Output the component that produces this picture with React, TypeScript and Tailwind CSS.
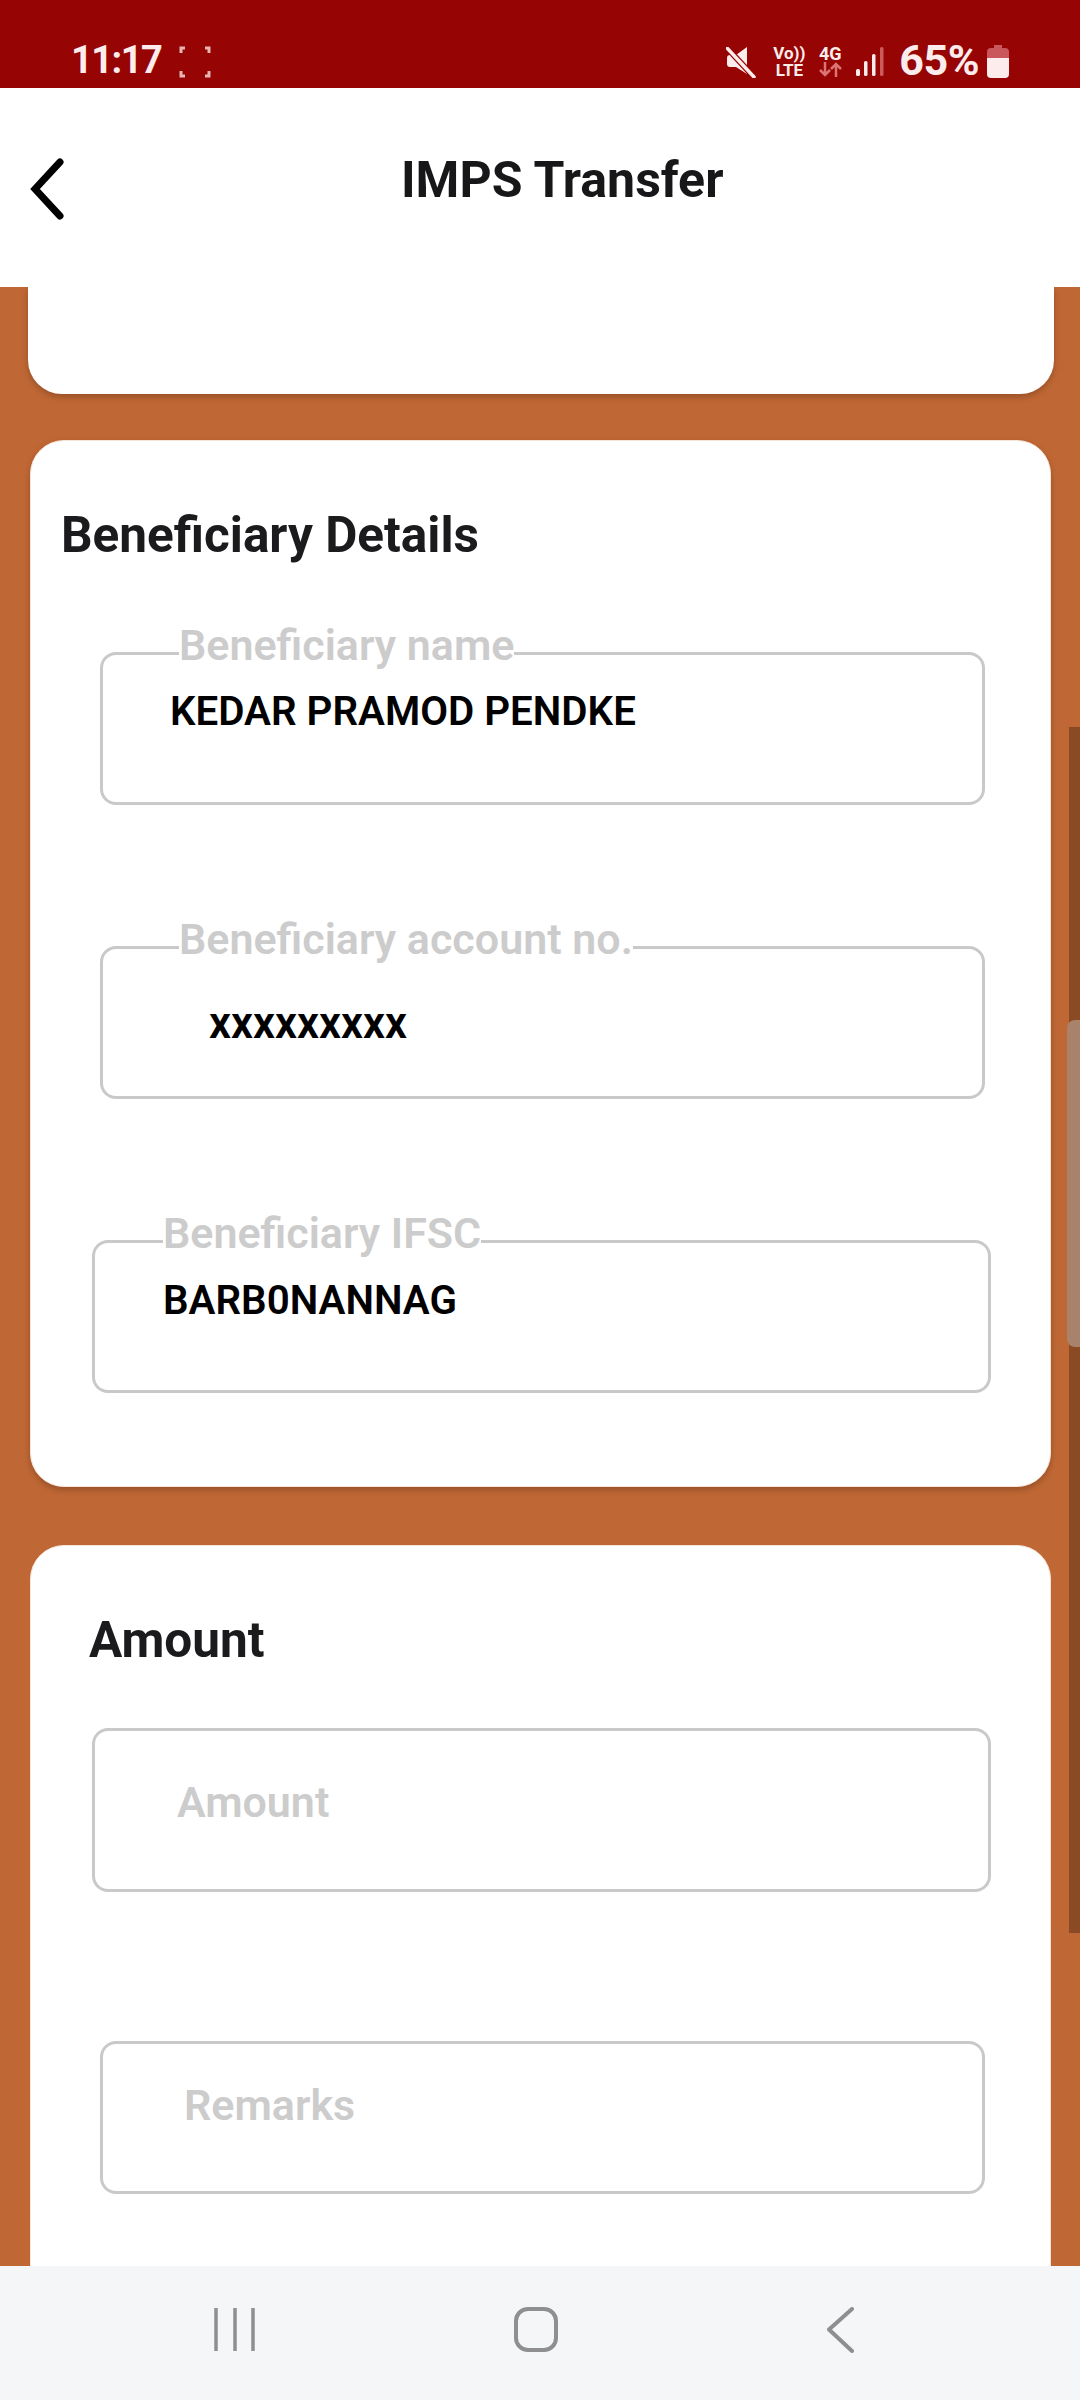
const Field = ({ label, value, placeholder, boxClass, labelClass, textClass }: { label?: string; value?: string; placeholder?: string; boxClass: string; labelClass?: string; textClass: string }) => (
    <div className={`relative rounded-[16px] border-[3px] border-[#c9c9c9] bg-white ${boxClass}`}>
        {label ? <span className={`absolute top-[-34px] bg-white text-[43px] leading-[48px] font-semibold text-[#cccccc] ${labelClass ?? ""}`}>{label}</span> : null}
        {value ? <p className={`font-semibold text-black ${textClass}`}>{value}</p> : null}
        {placeholder ? <p className={`text-[43px] leading-[48px] font-semibold text-[#cccccc] ${textClass}`}>{placeholder}</p> : null}
    </div>
);

function StatusBar() {
    return (
        <div className="flex h-[88px] shrink-0 items-start bg-[#960404] pt-[38px] text-[#fdecec]">
            <span className="ml-[71px] text-[38px] leading-[44px] font-bold tracking-[-1.5px]">11:17</span>
            <svg className="mt-[8px] ml-[18px]" width="32" height="32" viewBox="0 0 32 32" fill="none" stroke="#e8b4b4" strokeWidth="3">
                <path d="M6 2H2v5M26 2h4v5M2 25v5h4M30 25v5h-4" />
            </svg>
            <div className="ml-auto mr-[71px] flex items-start">
                <svg className="mt-[9px]" width="30" height="31" viewBox="0 0 30 31" fill="#fdecec">
                    <path d="M21 0v27L10 20H4a3 3 0 0 1-3-3v-6a3 3 0 0 1 3-3h6z" />
                    <path d="M1 1l27 29" stroke="#960404" strokeWidth="6" />
                    <path d="M1 1l27 29" stroke="#fdecec" strokeWidth="3.500" strokeLinecap="round" />
                </svg>
                <div className="ml-[17px] mt-[7px] flex w-[32px] flex-col items-center text-[17px] leading-[17px] font-bold">
                    <span>Vo))</span>
                    <span>LTE</span>
                </div>
                <div className="ml-[12px] mt-[7px] flex w-[26px] flex-col items-center">
                    <span className="text-[18px] leading-[17px] font-bold">4G</span>
                    <svg width="25" height="15" viewBox="0 0 25 15" fill="none" stroke="#dc7474" strokeWidth="2.500">
                        <path d="M7 0v13M2 8l5 5 5-5M18 15V2M13 7l5-5 5 5" />
                    </svg>
                </div>
                <svg className="mt-[9px] ml-[13px]" width="28" height="30" viewBox="0 0 28 30">
                    <rect x="0" y="22" width="4" height="7" rx="1.500" fill="#fdecec" />
                    <rect x="8" y="14" width="3.500" height="15" rx="1.500" fill="#fdecec" />
                    <rect x="16" y="7" width="3.500" height="22" rx="1.500" fill="#fdecec" />
                    <rect x="24" y="0" width="3.500" height="29" rx="1.500" fill="#cc5a5a" />
                </svg>
                <span className="ml-[15px] text-[43px] leading-[44px] font-bold tracking-[-0.5px]">65%</span>
                <svg className="mt-[7px] ml-[8px]" width="22" height="33" viewBox="0 0 22 33">
                    <path d="M7 0h8v3h3a4 4 0 0 1 4 4v6H0V7a4 4 0 0 1 4-4h3z" fill="#c9575b" />
                    <path d="M0 13h22v16a4 4 0 0 1-4 4H4a4 4 0 0 1-4-4z" fill="#fdecec" />
                </svg>
            </div>
        </div>
    );
}

function NavBar() {
    return (
        <div className="flex h-[134px] shrink-0 items-start bg-[#f5f6f8] pt-[41px]">
            <svg className="ml-[212px]" width="44" height="46" viewBox="0 0 44 46" stroke="#8f8f92" strokeWidth="3.500" fill="none">
                <path d="M4 1v43M23 1v43M41 1v43" />
            </svg>
            <svg className="ml-[258px]" width="44" height="46" viewBox="0 0 44 46" stroke="#8f8f92" strokeWidth="4" fill="none">
                <rect x="2" y="2" width="40" height="41" rx="12" />
            </svg>
            <svg className="ml-[268px]" width="30" height="46" viewBox="0 0 30 46" stroke="#8f8f92" strokeWidth="4" strokeLinecap="round" strokeLinejoin="round" fill="none">
                <path d="M26 2L3 22.500L26 44" />
            </svg>
        </div>
    );
}

export default function App() {
    return (
        <div className="relative flex h-[2400px] w-[1080px] flex-col overflow-hidden font-[family-name:Roboto]">
            <StatusBar />

            <div className="relative flex h-[199px] shrink-0 items-start bg-white">
                <svg className="absolute top-[70px] left-[27px]" width="38" height="62" viewBox="0 0 38 62" fill="none" stroke="#000" strokeWidth="7" strokeLinecap="round" strokeLinejoin="miter">
                    <path d="M33 4L8 31l25 27" />
                </svg>
                <h1 className="ml-[401px] mt-[64px] text-[50px] leading-[56px] font-bold text-[#17171a]">IMPS Transfer</h1>
            </div>

            <div className="relative min-h-0 flex-1 overflow-hidden bg-[#c06835]">
                <div className="ml-[28px] h-[107px] w-[1026px] rounded-b-[34px] bg-white shadow-[0_3px_6px_rgba(90,45,20,0.4)]" />

                <div className="mt-[46px] ml-[30px] h-[1047px] w-[1021px] rounded-[34px] border border-[#f6e4d8] bg-white pt-[67px] shadow-[0_3px_6px_rgba(90,45,20,0.4)]">
                    <h2 className="ml-[30px] text-[49.500px] leading-[54px] font-bold text-[#1b1b1e]">Beneficiary Details</h2>
                    <Field boxClass="mt-[90px] ml-[69px] h-[153px] w-[885px]" labelClass="left-[76px]" label="Beneficiary name" value="KEDAR PRAMOD PENDKE" textClass="text-[40.300px] leading-[46px] pl-[67px] pt-[34px]" />
                    <Field boxClass="mt-[141px] ml-[69px] h-[153px] w-[885px]" labelClass="left-[76px]" label="Beneficiary account no." value="xxxxxxxxx" textClass="text-[43.500px] leading-[46px] pl-[106px] pt-[52px]" />
                    <Field boxClass="mt-[141px] ml-[61px] h-[153px] w-[899px]" labelClass="left-[68px]" label="Beneficiary IFSC" value="BARB0NANNAG" textClass="text-[40.300px] leading-[46px] pl-[68px] pt-[35px]" />
                </div>

                <div className="mt-[58px] ml-[30px] h-[900px] w-[1021px] rounded-[34px] border border-[#f6e4d8] bg-white pt-[67px]">
                    <h2 className="ml-[58px] text-[49.500px] leading-[54px] font-bold text-[#1b1b1e]">Amount</h2>
                    <Field boxClass="mt-[61px] ml-[61px] h-[164px] w-[899px]" placeholder="Amount" textClass="pl-[82px] pt-[47px]" />
                    <Field boxClass="mt-[149px] ml-[69px] h-[153px] w-[885px]" placeholder="Remarks" textClass="pl-[81px] pt-[37px]" />
                </div>

                <div className="absolute top-[440px] right-0 h-[1206px] w-[11px] bg-[#8a4a24]" />
                <div className="absolute top-[733px] right-0 h-[327px] w-[13px] rounded-l-[8px] bg-[#a8826a]" />
            </div>

            <NavBar />
        </div>
    );
}
